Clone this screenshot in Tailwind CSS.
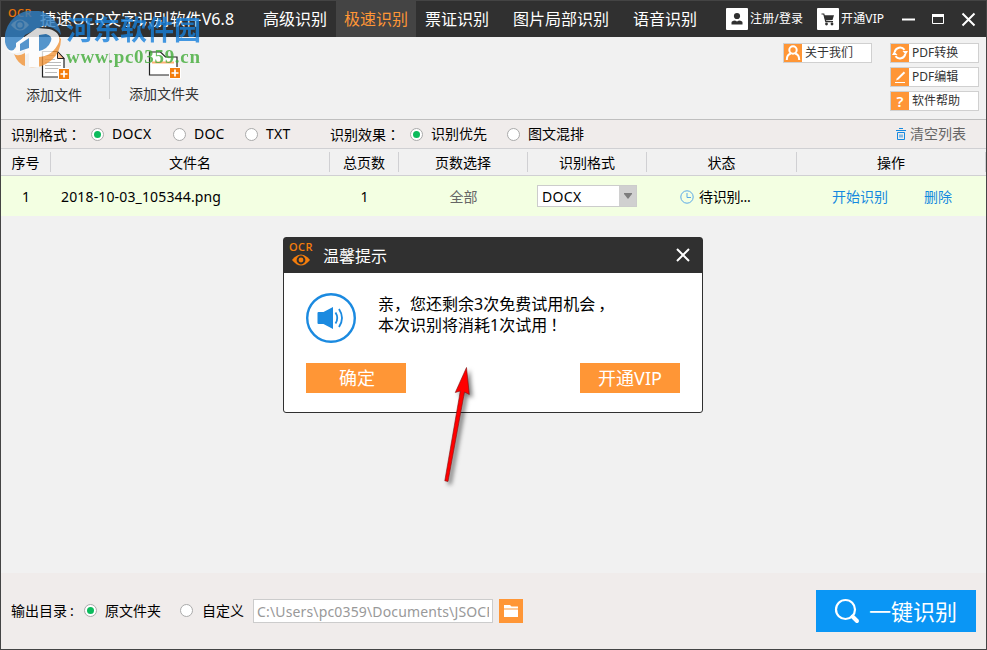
<!DOCTYPE html>
<html lang="zh-CN">
<head>
<meta charset="utf-8">
<title>捷速OCR文字识别软件</title>
<script src="https://cdn.jsdelivr.net/npm/@tailwindcss/browser@4"></script>
</head>
<body class="overflow-hidden">
<div class="relative flex h-[650px] w-[987px] flex-col overflow-hidden border border-[#444] bg-[#f1f1f1] font-['Noto_Sans','Noto_Sans_CJK_SC',sans-serif] text-[14px] leading-[20px] whitespace-nowrap text-black">

  <!-- title bar -->
  <header class="flex h-9 shrink-0 items-center bg-[#303030] text-[16px] text-white">
    <div class="ml-[7px] flex w-[26px] flex-col items-start">
      <span class="h-[11px] font-['Open_Sans'] text-[11px] leading-[11px] font-semibold tracking-[0.4px] text-[#e8740c]">OCR</span>
      <svg class="mt-[1px] ml-[3px] h-3 w-[18px]" viewBox="0 0 18 12"><path d="M0 6Q9-5 18 6Q9 17 0 6Z" fill="#f1a45c"/><circle cx="9" cy="6" r="3.6" fill="none" stroke="#303030" stroke-width="1.8"/></svg>
    </div>
    <h1 class="ml-[6px] w-[223px] tracking-[0.1px]">捷速OCR文字识别软件V6.8</h1>
    <nav class="flex h-full items-center">
      <a class="w-[73px]">高级识别</a>
      <a class="flex h-full w-20 items-center justify-center bg-[#444] text-[#ff9636]">极速识别</a>
      <a class="ml-[9px] w-[88px]">票证识别</a>
      <a class="w-[120px]">图片局部识别</a>
      <a class="w-[93px]">语音识别</a>
    </nav>
    <div class="flex items-center text-[12px] tracking-[0.15px]">
      <svg class="h-[22px] w-[22px]" viewBox="0 0 22 22"><rect width="22" height="22" rx="1" fill="#fff"/><circle cx="11" cy="8" r="3.1" fill="#303030"/><path d="M5.5 16.5v-2q0-1.500 3.500-2l2 1 2-1q3.500.5 3.500 2v2z" fill="#303030"/></svg>
      <span class="ml-[2px] w-[67px]">注册/登录</span>
      <svg class="h-[22px] w-[22px]" viewBox="0 0 22 22"><rect width="22" height="22" rx="1" fill="#fff"/><path d="M4.500 6h2.300l2 7.700h7.200" fill="none" stroke="#303030" stroke-width="1.200"/><path d="M7 7.300h10l-1.500 4.700-7.200.6z" fill="#303030"/><circle cx="9.500" cy="16" r="1.400" fill="#303030"/><circle cx="15" cy="16" r="1.400" fill="#303030"/></svg>
      <span class="ml-[2px] w-[61px]">开通VIP</span>
      <svg class="h-[22px] w-[76px]" viewBox="0 0 76 22" fill="none" stroke="#fff"><path d="M0 11.500h13" stroke-width="2"/><path d="M30.500 7v8.500h11V7" stroke-width="1"/><path d="M30 7.500h12" stroke-width="3"/><path d="M60.500 5.500l12 12M72.500 5.500l-12 12" stroke-width="2"/></svg>
    </div>
  </header>

  <!-- toolbar -->
  <section class="flex h-[82px] shrink-0 text-[#333]">
    <div class="flex w-[106px] flex-col items-center pt-[13px]">
      <svg class="h-[30px] w-[30px]" viewBox="0 0 30 30"><path d="M3.500 1.500h15l6.500 7v18.500H3.500z" fill="#fff" stroke="#222" stroke-width="1.200"/><path d="M18.500 1.500v7H25z" fill="#ffc18f" stroke="#222"/><path d="M6 5.500h10M6 9.500h10M6 12.500h16M6 15.500h16M6 18.500h14M6 22.500h12" stroke="#bbb"/><path d="M19.500 18.500h11v11h-11z" fill="#f47d0c" stroke="#fff"/><path d="M25 20.500v7M21.500 24h7" stroke="#fff" stroke-width="1.700"/></svg>
      <span class="mt-[5px]">添加文件</span>
    </div>
    <div class="mt-4 mr-px ml-[2px] h-[46px] w-px bg-[#cfcfcf]"></div>
    <div class="flex w-[106px] flex-col items-center pt-[13px]">
      <svg class="h-[30px] w-[34px]" viewBox="0 0 34 30"><path d="M2.500 25V2h11l5 5H30v18z" fill="#fff" stroke="#222" stroke-width="1.200"/><path d="M5 12.500h22" stroke="#ffb070" stroke-width="2"/><path d="M22.500 17.500h11v11h-11z" fill="#f47d0c" stroke="#fff"/><path d="M28 19.500v7M24.500 23h7" stroke="#fff" stroke-width="1.700"/></svg>
      <span class="mt-[4px]">添加文件夹</span>
    </div>
    <div class="mt-[6px] mr-[7px] ml-auto flex items-start gap-[18px] text-[12px] leading-[18px]">
      <a class="flex h-5 w-[89px] border border-[#d0d0d0] bg-white">
        <svg class="mr-[3px] h-[18px] w-[18px]" viewBox="0 0 18 18"><rect width="18" height="18" fill="#ff9636"/><circle cx="9" cy="6" r="3.700" fill="none" stroke="#fff" stroke-width="2"/><path d="M2.800 16q0-5.500 4-6.500M15.200 16q0-5.500-4-6.500" fill="none" stroke="#fff" stroke-width="2"/></svg>
        关于我们</a>
      <div class="flex flex-col gap-1">
        <a class="flex h-5 w-[89px] border border-[#d0d0d0] bg-white">
          <svg class="mr-[3px] h-[18px] w-[18px]" viewBox="0 0 18 18"><rect width="18" height="18" fill="#ff9636"/><path d="M3.700 8A5.500 5.500 0 0 1 13.500 5.800M14.300 10A5.500 5.500 0 0 1 4.500 12.200" fill="none" stroke="#fff" stroke-width="2"/><path d="M11.500 7h5.500l-2.200 3.700zM6.500 11H1l2.200-3.700z" fill="#fff"/></svg>
          PDF转换</a>
        <a class="flex h-5 w-[89px] border border-[#d0d0d0] bg-white">
          <svg class="mr-[3px] h-[18px] w-[18px]" viewBox="0 0 18 18"><rect width="18" height="18" fill="#ff9636"/><path d="M4 14.500h10" stroke="#fff"/><path d="M6 10.200L12.800 3.500l1.400 1.400L7.500 11.600 5 12.500z" fill="#fff"/></svg>
          PDF编辑</a>
        <a class="flex h-5 w-[89px] border border-[#d0d0d0] bg-white">
          <span class="mr-[3px] h-[18px] w-[18px] bg-[#ff9636] text-center text-[15px] font-semibold text-white">?</span>
          软件帮助</a>
      </div>
    </div>
  </section>

  <!-- recognition options -->
  <section class="flex h-[30px] shrink-0 items-center border-y border-t-[#bfbfbf] border-b-[#d0d0d3] bg-[#f0eceb] pl-[10px]">
    <span class="w-[80px]">识别格式<span class="font-['Noto_Sans_CJK_TC']" lang="zh-TW">：</span></span>
    <i class="flex size-[13px] items-center justify-center rounded-full border border-[#aaa] bg-white"><i class="size-[7px] rounded-full bg-[#0cbb5c]"></i></i>
    <span class="ml-2 w-[61px] tracking-[0.3px]">DOCX</span>
    <i class="size-[13px] rounded-full border border-[#aaa] bg-white"></i>
    <span class="ml-2 w-[51px] tracking-[0.2px]">DOC</span>
    <i class="size-[13px] rounded-full border border-[#aaa] bg-white"></i>
    <span class="ml-2 w-[64px] tracking-[0.2px]">TXT</span>
    <span class="w-[80px]">识别效果<span class="font-['Noto_Sans_CJK_TC']" lang="zh-TW">：</span></span>
    <i class="flex size-[13px] items-center justify-center rounded-full border border-[#aaa] bg-white"><i class="size-[7px] rounded-full bg-[#0cbb5c]"></i></i>
    <span class="ml-2 w-[76px]">识别优先</span>
    <i class="size-[13px] rounded-full border border-[#aaa] bg-white"></i>
    <span class="ml-2">图文混排</span>
    <svg class="mr-[4px] ml-auto h-3 w-[10px]" viewBox="0 0 10 12" fill="none" stroke="#1689df"><path d="M3 .5h4M0 2.500h10M1.500 4.500v7h7v-7zM4 6.500v3M6 6.500v3"/></svg>
    <span class="mr-5 text-[#666]">清空列表</span>
  </section>

  <!-- table -->
  <section class="grid h-[27px] shrink-0 grid-cols-[50px_279px_69px_129px_119px_150px_189px] items-center border-b border-[#d0d0d3] text-center leading-[21px]">
    <span class="h-5 border-r border-[#d0d0d3]">序号</span>
    <span class="h-5 border-r border-[#d0d0d3]">文件名</span>
    <span class="h-5 border-r border-[#d0d0d3]">总页数</span>
    <span class="h-5 border-r border-[#d0d0d3]">页数选择</span>
    <span class="h-5 border-r border-[#d0d0d3]">识别格式</span>
    <span class="h-5 border-r border-[#d0d0d3]">状态</span>
    <span class="h-5 border-r border-[#d0d0d3]">操作</span>
  </section>
  <section class="grid h-10 shrink-0 grid-cols-[50px_279px_69px_129px_119px_150px_189px] items-center bg-[#f3ffe2] pt-px text-center">
    <span>1</span>
    <span class="pl-[10px] text-left tracking-[0.15px]">2018-10-03_105344.png</span>
    <span>1</span>
    <span class="text-[#666]">全部</span>
    <div class="mb-[2px] ml-[9px] flex h-[22px] w-[100px] border border-[#ccc] bg-white">
      <span class="flex-1 pt-px pl-1 text-left tracking-[0.3px]">DOCX</span>
      <span class="flex w-[17px] items-center justify-center bg-[#d0d0d0]"><svg class="h-[6px] w-2" viewBox="0 0 8 6"><path d="M0 0h8v1L4 6 0 1z" fill="#7d7d7d"/></svg></span>
    </div>
    <div class="flex items-center pl-[33px]">
      <svg class="h-[14px] w-[14px]" viewBox="0 0 14 14" fill="none" stroke="#5aa9e8"><circle cx="7" cy="7" r="6.200"/><path d="M7 3v4.500h4"/></svg>
      <span class="ml-[5px] pt-px tracking-[-0.3px]">待识别...</span>
    </div>
    <div class="flex pl-[35px] text-[#1689df]"><a class="w-[92px] text-left">开始识别</a><a>删除</a></div>
  </section>

  <main class="flex-1"></main>

  <!-- output bar -->
  <footer class="flex h-[76px] shrink-0 items-center bg-[#f0eceb] pl-[10px]">
    <span class="w-[73px]">输出目录<span class="ml-[3px]">:</span></span>
    <i class="mb-[2px] flex size-[13px] items-center justify-center rounded-full border border-[#aaa] bg-white"><i class="size-[7px] rounded-full bg-[#0cbb5c]"></i></i>
    <span class="ml-2 w-[75px]">原文件夹</span>
    <i class="mb-[2px] size-[13px] rounded-full border border-[#aaa] bg-white"></i>
    <span class="ml-[9px] w-[51px]">自定义</span>
    <div class="h-6 w-[240px] border border-[#ccc] bg-white px-[3px] leading-[23px] text-[#999]"><div class="overflow-hidden tracking-[0.15px]">C:\Users\pc0359\Documents\JSOCR</div></div>
    <button class="ml-[6px] flex h-6 w-6 items-center justify-center bg-[#ff9636]"><svg class="h-3 w-[14px]" viewBox="0 0 14 12" fill="#fff"><path d="M0 0h6l1.500 1.500H14v2H0zM0 4.500h14V12H0z"/></svg></button>
    <button class="mr-[10px] ml-auto flex h-[42px] w-[160px] items-center bg-[#0a96f5] pl-[18px] text-[22px] text-white">
      <svg class="mr-[9px] h-[26px] w-[26px]" viewBox="0 0 26 26" fill="none" stroke="#fff"><circle cx="11.500" cy="11.500" r="9.500" stroke-width="2.200"/><path d="M18.500 18.500l4.500 4.500" stroke-width="4" stroke-linecap="round"/></svg>
      <span class="pb-px">一键识别</span></button>
  </footer>

  <!-- trial reminder dialog -->
  <div class="absolute top-[236px] left-[282px] flex h-[176px] w-[420px] flex-col rounded-[3px] border border-[#303030] bg-white">
    <div class="flex h-[35px] items-center bg-[#303030] text-[16px] text-white">
      <div class="mb-[4px] ml-[5px] flex w-[28px] flex-col">
        <span class="h-[11px] font-['Open_Sans'] text-[11px] leading-[11px] font-semibold tracking-[0.4px] text-[#f47d0c]">OCR</span>
        <svg class="mt-[2px] ml-[3px] h-3 w-[18px]" viewBox="0 0 18 12"><path d="M0 6Q9-5 18 6Q9 17 0 6Z" fill="#f47d0c"/><circle cx="9" cy="6" r="3.400" fill="none" stroke="#303030" stroke-width="2"/></svg>
      </div>
      <span class="ml-[6px]">温馨提示</span>
      <svg class="mr-[12px] mb-[2px] ml-auto h-[14px] w-[14px]" viewBox="0 0 14 14"><path d="M1 1l12 12M13 1L1 13" stroke="#fff" stroke-width="2"/></svg>
    </div>
    <div class="mt-5 ml-[22px] flex">
      <svg class="h-[50px] w-[50px]" viewBox="0 0 50 50"><circle cx="25" cy="25" r="23.800" fill="#fff" stroke="#1b8ae0" stroke-width="2.400"/><path d="M12.500 19h5l9.500-5v22l-9.500-5h-5q-1 0-1-1V20q0-1 1-1z" fill="#1b8ae0"/><path d="M29.500 19.500q3.500 5.500 0 11M33 16q6 9 0 18" fill="none" stroke="#1b8ae0" stroke-width="1.800"/></svg>
      <p class="mt-px ml-[22px] text-[16px] leading-[21px]">亲，您还剩余3次免费试用机会<span class="ml-[3px]">，</span><br>本次识别将消耗1次试用<span class="ml-[3px]">！</span></p>
    </div>
    <div class="mt-5 flex justify-between px-[22px] text-[18px] text-white">
      <button class="h-[30px] w-[100px] bg-[#ff9636] pl-[2px]">确定</button>
      <button class="h-[30px] w-[100px] bg-[#ff9636]">开通VIP</button>
    </div>
  </div>

  <!-- pointer arrow -->
  <svg class="absolute top-[359px] left-[434px] h-[130px] w-[50px] drop-shadow-[3px_3px_2px_rgba(0,0,0,0.5)]" viewBox="0 0 50 130"><path d="M31.500 7.500L34.300 34.500l-4.800-2.500L13 121.500l-3.200-.7L25.300 31l-5 1.500z" fill="#f00" stroke="#7a1010" stroke-width=".6"/></svg>

  <!-- watermark -->
  <div class="absolute top-[10px] left-[4px] flex opacity-80">
    <svg class="h-[57px] w-[57px]" viewBox="0 0 57 57">
      <path d="M0 31A28 28 0 0 1 56 24Q50 15 38 15L20 24 7 41Q1 38 0 31z" fill="#2f7fc4"/>
      <path d="M56 28A28 28 0 0 1 24 56V42Q45 42 50 29L43 22Q50 20 56 28z" fill="#f29539"/>
      <path d="M9 43Q13 46 20 42V55Q13 53 9 43z" fill="#f29539"/>
      <path d="M1 36Q4 42 11 38V32L32 17 44 18Q56 21 54 31Q48 45 34 46V56H24V42L20 44V39Q6 47 1 36z" fill="#fff"/>
      <path d="M15 33L24 27V37L15 40z" fill="#2f7fc4"/>
      <path d="M34 24L41 23Q48 25 46 30Q43 38 34 40z" fill="#2f7fc4"/>
    </svg>
    <div class="ml-1 flex flex-col font-bold">
      <span class="h-[30px] font-['Noto_Sans_CJK_SC',sans-serif] text-[27px] leading-[36px] text-[#1780dc]">河东软件园</span>
      <span class="mt-[4px] font-['Liberation_Serif',serif] text-[19px] leading-[24px] tracking-[0.7px] text-[#41ac38]">www.pc0359.cn</span>
    </div>
  </div>
</div>
</body>
</html>
